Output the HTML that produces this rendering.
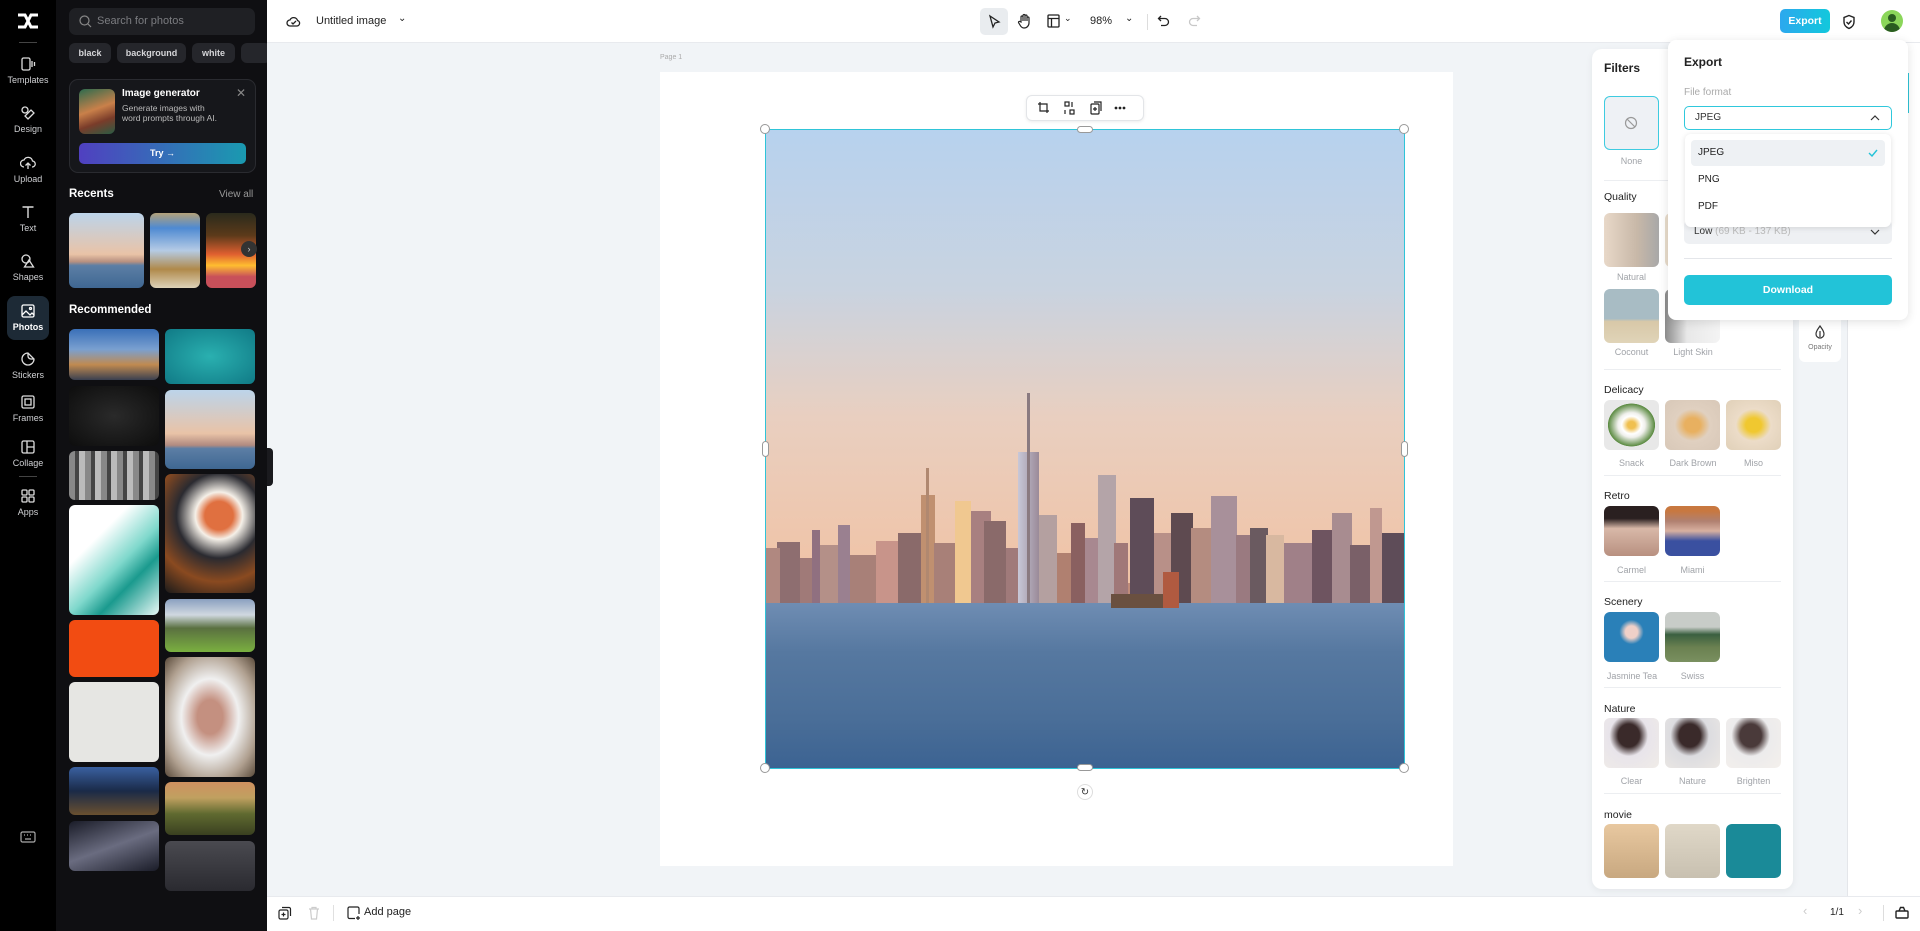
<!DOCTYPE html>
<html><head><meta charset="utf-8"><style>
*{box-sizing:border-box;margin:0;padding:0}
body{width:1920px;height:931px;overflow:hidden;background:#f1f4f7;font-family:"Liberation Sans",sans-serif;position:relative}
.a{position:absolute}
.nav{left:0;top:0;width:56px;height:931px;background:#000}
.ni{position:absolute;left:0;width:56px;text-align:center;color:#cfd0d3;font-size:9px}
.ni svg{display:block;margin:0 auto 3px}
.panel{left:56px;top:0;width:211px;height:931px;background:#0f0f12;overflow:hidden}
.chip{position:absolute;top:43px;height:20px;border-radius:6px;background:#25262b;color:#d6d6d9;font-size:9px;font-weight:bold;line-height:20px;text-align:center}
.th{position:absolute;border-radius:6px;overflow:hidden}
.lbl{font-size:9px;color:#a0a3a8;text-align:center;position:absolute}
.ft{position:absolute;width:55px;height:54px;border-radius:6px}
.sec{position:absolute;left:12px;font-size:10.5px;color:#222}
.dv{position:absolute;left:12px;width:177px;height:1px;background:#eceef1}
.bld{position:absolute;bottom:0}
</style></head><body>
<!-- nav -->
<div class="a nav">
 <svg class="a" style="left:16px;top:12px" width="24" height="18" viewBox="0 0 24 18"><path d="M2 3h7l6 12h7M2 15h7l6-12h7" stroke="#fff" stroke-width="3" fill="none"/></svg>
 <div class="a" style="left:19px;top:42px;width:18px;height:1px;background:#444"></div>
 <div class="ni" style="top:56px"><svg width="16" height="16" viewBox="0 0 16 16" fill="none" stroke="#ddd" stroke-width="1.3"><rect x="2" y="2" width="8" height="12" rx="1.5"/><path d="M12 5v6M14.5 6v4"/></svg>Templates</div>
 <div class="ni" style="top:105px"><svg width="16" height="16" viewBox="0 0 16 16" fill="none" stroke="#ddd" stroke-width="1.3"><circle cx="5" cy="5" r="3"/><path d="M8 14l6-6-3-3-6 6z"/></svg>Design</div>
 <div class="ni" style="top:155px"><svg width="16" height="16" viewBox="0 0 16 16" fill="none" stroke="#ddd" stroke-width="1.3"><path d="M4 12a3.5 3.5 0 010-7 4.5 4.5 0 018.5 1A3 3 0 0112 12M8 14V8M5.5 10.5L8 8l2.5 2.5"/></svg>Upload</div>
 <div class="ni" style="top:204px"><svg width="16" height="16" viewBox="0 0 16 16" fill="none" stroke="#ddd" stroke-width="1.4"><path d="M2.5 3h11M8 3v11"/></svg>Text</div>
 <div class="ni" style="top:253px"><svg width="16" height="16" viewBox="0 0 16 16" fill="none" stroke="#ddd" stroke-width="1.3"><circle cx="6" cy="6" r="4"/><path d="M9 7l4.5 7h-9z"/></svg>Shapes</div>
 <div class="a" style="left:7px;top:296px;width:42px;height:44px;border-radius:8px;background:#1d2a36"></div>
 <div class="ni" style="top:303px;color:#fff;font-weight:bold"><svg width="16" height="16" viewBox="0 0 16 16" fill="none" stroke="#fff" stroke-width="1.3"><rect x="2" y="2" width="12" height="12" rx="1.5"/><path d="M2 12l4-4 4 4 2-2 2 2"/><circle cx="10.5" cy="5.5" r="1"/></svg>Photos</div>
 <div class="ni" style="top:351px"><svg width="16" height="16" viewBox="0 0 16 16" fill="none" stroke="#ddd" stroke-width="1.3"><path d="M14 8a6 6 0 11-6-6l6 6zM8 2v3a3 3 0 003 3h3"/></svg>Stickers</div>
 <div class="ni" style="top:394px"><svg width="16" height="16" viewBox="0 0 16 16" fill="none" stroke="#ddd" stroke-width="1.3"><rect x="2" y="2" width="12" height="12" rx="1.5"/><rect x="5" y="5" width="6" height="6"/></svg>Frames</div>
 <div class="ni" style="top:439px"><svg width="16" height="16" viewBox="0 0 16 16" fill="none" stroke="#ddd" stroke-width="1.3"><rect x="2" y="2" width="12" height="12" rx="1.5"/><path d="M7 2v12M7 8h7"/></svg>Collage</div>
 <div class="a" style="left:19px;top:476px;width:18px;height:1px;background:#444"></div>
 <div class="ni" style="top:488px"><svg width="16" height="16" viewBox="0 0 16 16" fill="none" stroke="#ddd" stroke-width="1.3"><rect x="2" y="2" width="5" height="5" rx="1"/><rect x="9" y="2" width="5" height="5" rx="1"/><rect x="2" y="9" width="5" height="5" rx="1"/><rect x="9" y="9" width="5" height="5" rx="1"/></svg>Apps</div>
 <svg class="a" style="left:20px;top:830px" width="16" height="14" viewBox="0 0 16 14" fill="none" stroke="#aaa" stroke-width="1.2"><rect x="1" y="2" width="14" height="10" rx="1.5"/><path d="M4 5h1M7 5h1M10 5h1M5 9h6"/></svg>
</div>
<!-- panel -->
<div class="a panel">
 <div class="a" style="left:13px;top:8px;width:186px;height:27px;border-radius:7px;background:#1f2024"></div>
 <svg class="a" style="left:23px;top:15px" width="13" height="13" viewBox="0 0 13 13" fill="none" stroke="#888" stroke-width="1.2"><circle cx="5.5" cy="5.5" r="4.5"/><path d="M9 9l3 3"/></svg>
 <div class="a" style="left:41px;top:15px;color:#7b7c80;font-size:11px">Search for photos</div>
 <div class="chip" style="left:13px;width:42px">black</div>
 <div class="chip" style="left:61px;width:69px">background</div>
 <div class="chip" style="left:136px;width:43px">white</div>
 <div class="chip" style="left:185px;width:30px"></div>
 <div class="a" style="left:13px;top:79px;width:187px;height:94px;border-radius:9px;background:#16171b;border:1px solid #2a2b30"></div>
 <div class="a" style="left:23px;top:89px;width:36px;height:45px;border-radius:6px;background:linear-gradient(160deg,#2c6b4e,#c9804a 45%,#7a3c2a 70%,#2a5c44)"></div>
 <div class="a" style="left:66px;top:88px;color:#fff;font-size:10px;font-weight:bold">Image generator</div>
 <div class="a" style="left:66px;top:103px;color:#bbb;font-size:8.5px;line-height:10px">Generate images with<br>word prompts through AI.</div>
 <div class="a" style="left:180px;top:86px;color:#888;font-size:12px">✕</div>
 <div class="a" style="left:23px;top:143px;width:167px;height:21px;border-radius:5px;background:linear-gradient(90deg,#5040c0,#1a9ab0);color:#fff;font-size:9px;font-weight:bold;text-align:center;line-height:21px">Try →</div>
 <div class="a" style="left:13px;top:188px;color:#fff;font-size:11.5px;font-weight:bold">Recents</div>
 <div class="a" style="left:163px;top:189px;color:#999;font-size:10px">View all</div>
 <div class="th" style="left:13px;top:213px;width:75px;height:75px;background:linear-gradient(#bcd4ea,#e9c3a7 55%,#b79080 65%,#5c7ea5 70%,#3f6792)"></div>
 <div class="th" style="left:94px;top:213px;width:50px;height:75px;background:linear-gradient(#b4a27a,#4e8ad2 20%,#b5cbe5 50%,#b0894a 75%,#ddd2b8)"></div>
 <div class="th" style="left:150px;top:213px;width:50px;height:75px;background:linear-gradient(#2a2a1c,#5c3a1a 30%,#e06030 55%,#ffbd30 70%,#c8505a 85%)"></div>
 <div class="a" style="left:185px;top:241px;width:16px;height:16px;border-radius:50%;background:#333;color:#ccc;font-size:9px;text-align:center;line-height:16px">›</div>
 <div class="a" style="left:13px;top:304px;color:#fff;font-size:11.5px;font-weight:bold">Recommended</div>
 <div class="th" style="left:13px;top:329px;width:90px;height:51px;background:linear-gradient(#3a70b8,#7aa0d0 40%,#c08a50 70%,#3a4050)"></div>
 <div class="th" style="left:13px;top:386px;width:90px;height:60px;background:radial-gradient(#2a2a2a,#0d0d0d)"></div>
 <div class="th" style="left:13px;top:451px;width:90px;height:49px;background:repeating-linear-gradient(90deg,#888 0 6px,#444 6px 10px,#bbb 10px 16px)"></div>
 <div class="th" style="left:13px;top:505px;width:90px;height:110px;background:linear-gradient(135deg,#fff 30%,#7fd8cc 55%,#1a9a8e 70%,#e8f8f6)"></div>
 <div class="th" style="left:13px;top:620px;width:90px;height:57px;background:#f24c12"></div>
 <div class="th" style="left:13px;top:682px;width:90px;height:80px;background:#e6e6e3"></div>
 <div class="th" style="left:13px;top:767px;width:90px;height:48px;background:linear-gradient(#3a60a0,#1a2a48 50%,#6a5030)"></div>
 <div class="th" style="left:13px;top:821px;width:90px;height:50px;background:linear-gradient(160deg,#1a1c28,#6a6c80 50%,#1a1c28)"></div>
 <div class="th" style="left:109px;top:329px;width:90px;height:55px;background:radial-gradient(#2ab0b0,#107a86)"></div>
 <div class="th" style="left:109px;top:390px;width:90px;height:79px;background:linear-gradient(#bcd4ea,#e9c3a7 55%,#b08a80 70%,#5c7ea5 74%,#3f6792)"></div>
 <div class="th" style="left:109px;top:474px;width:90px;height:119px;background:radial-gradient(circle at 60% 35%,#e07040 15%,#f5f0e8 25%,#2a2a30 45%,#8a4a20 70%,#1a1a1a)"></div>
 <div class="th" style="left:109px;top:599px;width:90px;height:53px;background:linear-gradient(#8aa0c0,#d0d8e0 30%,#5a7040 55%,#7ab040)"></div>
 <div class="th" style="left:109px;top:657px;width:90px;height:120px;background:radial-gradient(#c49080 20%,#f0f0f0 45%,#b0a090 75%,#5a4a3a)"></div>
 <div class="th" style="left:109px;top:782px;width:90px;height:53px;background:linear-gradient(#d09060,#c0a060 30%,#606a30 60%,#3a4020)"></div>
 <div class="th" style="left:109px;top:841px;width:90px;height:50px;background:linear-gradient(#4a4a50,#2a2a30)"></div>
</div>
<div class="a" style="left:267px;top:448px;width:6px;height:38px;background:#1a1a1e;border-radius:0 4px 4px 0"></div>
<!-- top bar -->
<div class="a" style="left:267px;top:0;width:1653px;height:43px;background:#fff;border-bottom:1px solid #e8eaee"></div>
<svg class="a" style="left:286px;top:14px" width="15" height="14" viewBox="0 0 15 14" fill="none" stroke="#222" stroke-width="1.3"><path d="M4 12a3 3 0 010-6 4 4 0 017.5 0.5A2.8 2.8 0 0111 12z"/><path d="M5.5 8.5l1.5 1.5 3-3"/></svg>
<div class="a" style="left:316px;top:15px;font-size:11px;color:#222">Untitled image</div>
<div class="a" style="left:398px;top:13px;font-size:10px;color:#222">⌄</div>
<div class="a" style="left:980px;top:8px;width:28px;height:27px;border-radius:5px;background:#e9ecef"></div>
<svg class="a" style="left:987px;top:14px" width="14" height="15" viewBox="0 0 14 15" fill="none" stroke="#222" stroke-width="1.3"><path d="M3 2l9 6-4 1-2 4z"/></svg>
<svg class="a" style="left:1017px;top:13px" width="15" height="16" viewBox="0 0 15 16" fill="none" stroke="#222" stroke-width="1.2"><path d="M4 9V4a1 1 0 012 0v4V2.5a1 1 0 012 0V8V3a1 1 0 012 0v5V5a1 1 0 012 0v5a5 5 0 01-5 5c-2 0-3-1-4-3l-1.5-2.5a1 1 0 011.5-1z"/></svg>
<svg class="a" style="left:1047px;top:14px" width="13" height="14" viewBox="0 0 13 14" fill="none" stroke="#222" stroke-width="1.3"><rect x="1" y="1" width="11" height="12" rx="1"/><path d="M1 4.5h11M4.5 4.5V13"/></svg>
<div class="a" style="left:1064px;top:13px;font-size:9px;color:#222">⌄</div>
<div class="a" style="left:1090px;top:15px;font-size:11px;color:#222">98%</div>
<div class="a" style="left:1125px;top:13px;font-size:10px;color:#222">⌄</div>
<div class="a" style="left:1147px;top:14px;width:1px;height:16px;background:#ddd"></div>
<svg class="a" style="left:1157px;top:14px" width="13" height="14" viewBox="0 0 13 14" fill="none" stroke="#222" stroke-width="1.3"><path d="M4 2L1.5 4.5 4 7M1.5 4.5H8a3.5 3.5 0 010 7H4"/></svg>
<svg class="a" style="left:1188px;top:14px" width="13" height="14" viewBox="0 0 13 14" fill="none" stroke="#c8c8c8" stroke-width="1.3"><path d="M9 2l2.5 2.5L9 7M11.5 4.5H5a3.5 3.5 0 000 7h4"/></svg>
<div class="a" style="left:1780px;top:9px;width:50px;height:24px;border-radius:5px;background:linear-gradient(90deg,#2ca8ee,#12c8dc);color:#fff;font-size:10.5px;font-weight:bold;text-align:center;line-height:24px">Export</div>
<svg class="a" style="left:1842px;top:14px" width="14" height="16" viewBox="0 0 14 16" fill="none" stroke="#222" stroke-width="1.4"><path d="M7 1.5l5 2v4.5c0 3-2.3 5.3-5 6.5-2.7-1.2-5-3.5-5-6.5V3.5z"/><path d="M4.5 8l2 2 3-3.5"/></svg>
<div class="a" style="left:1881px;top:10px;width:22px;height:22px;border-radius:50%;background:#8bd65a;overflow:hidden"><div class="a" style="left:7px;top:4px;width:8px;height:8px;border-radius:50%;background:#2a5c20"></div><div class="a" style="left:3px;top:13px;width:16px;height:12px;border-radius:8px 8px 0 0;background:#2a5c20"></div></div>
<!-- canvas -->
<div class="a" style="left:660px;top:54px;font-size:7px;color:#aaa">Page 1</div>
<div class="a" style="left:660px;top:72px;width:793px;height:794px;background:#fff"></div>
<div class="a" style="left:1026px;top:95px;width:118px;height:26px;background:#fff;border:1px solid #e3e5e8;border-radius:6px;box-shadow:0 1px 3px rgba(0,0,0,.08)"></div>
<svg class="a" style="left:1037px;top:101px" width="100" height="14" viewBox="0 0 100 14" fill="none" stroke="#222" stroke-width="1.2"><path d="M3 1v9h9M1 3h9v9"/><rect x="28" y="1" width="4" height="4"/><rect x="33" y="9" width="4" height="4"/><path d="M35 1v5M28 9v4"/><rect x="54" y="3" width="8" height="10" rx="1"/><path d="M57 1h7v9M58 6v4M56 8h4"/><circle cx="79" cy="7" r=".8" fill="#222"/><circle cx="83" cy="7" r=".8" fill="#222"/><circle cx="87" cy="7" r=".8" fill="#222"/></svg>
<!-- image -->
<div class="a" style="left:766px;top:130px;width:638px;height:638px;overflow:hidden;background:linear-gradient(#b7d2ee 0%,#c9d3e0 25%,#e9cfc0 45%,#f0c3a6 70%,#e8b696 80%)">
 <div class="bld" style="left:0;bottom:165px;width:638px;height:20px;background:#c08c7a"></div>
 <div style="position:absolute;left:0;top:0;width:638px;height:473px">
 <div class="bld" style="left:11px;width:23px;height:61px;background:#8e6e70"></div>
 <div class="bld" style="left:0;width:14px;height:55px;background:#b08880"></div>
 <div class="bld" style="left:34px;width:14px;height:45px;background:#a07a78"></div>
 <div class="bld" style="left:46px;width:8px;height:73px;background:#907080"></div>
 <div class="bld" style="left:54px;width:20px;height:58px;background:#b49088"></div>
 <div class="bld" style="left:72px;width:12px;height:78px;background:#9a8090"></div>
 <div class="bld" style="left:84px;width:26px;height:48px;background:#a88078"></div>
 <div class="bld" style="left:110px;width:22px;height:62px;background:#c8948a"></div>
 <div class="bld" style="left:132px;width:24px;height:70px;background:#8a6a6a"></div>
 <div class="bld" style="left:155px;width:14px;height:108px;background:#c09070"></div>
 <div class="bld" style="left:160px;width:3px;height:135px;background:#b08870"></div>
 <div class="bld" style="left:168px;width:22px;height:60px;background:#a88078"></div>
 <div class="bld" style="left:189px;width:16px;height:102px;background:#f0c890"></div>
 <div class="bld" style="left:205px;width:20px;height:92px;background:#a88080"></div>
 <div class="bld" style="left:218px;width:22px;height:82px;background:#8a6a6a"></div>
 <div class="bld" style="left:240px;width:12px;height:55px;background:#a07a7a"></div>
 <div class="bld" style="left:252px;width:21px;height:151px;background:linear-gradient(90deg,#c8c8d8,#9a8a98)"></div>
 <div class="bld" style="left:261px;width:3px;height:210px;background:#8a7a80"></div>
 <div class="bld" style="left:273px;width:18px;height:88px;background:#b4a0a0"></div>
 <div class="bld" style="left:291px;width:18px;height:50px;background:#b08070"></div>
 <div class="bld" style="left:305px;width:14px;height:80px;background:#8a6060"></div>
 <div class="bld" style="left:319px;width:14px;height:65px;background:#a88890"></div>
 <div class="bld" style="left:332px;width:18px;height:128px;background:#b4a4a8"></div>
 <div class="bld" style="left:348px;width:14px;height:60px;background:#a07878"></div>
 <div class="bld" style="left:364px;width:24px;height:105px;background:#5e4c58"></div>
 <div class="bld" style="left:388px;width:20px;height:70px;background:#b89088"></div>
 <div class="bld" style="left:405px;width:22px;height:90px;background:#5e4a50"></div>
 <div class="bld" style="left:425px;width:20px;height:75px;background:#b48c80"></div>
 <div class="bld" style="left:445px;width:26px;height:107px;background:#a8909a"></div>
 <div class="bld" style="left:470px;width:16px;height:68px;background:#9a7a80"></div>
 <div class="bld" style="left:484px;width:18px;height:75px;background:#6a5a60"></div>
 <div class="bld" style="left:500px;width:18px;height:68px;background:#d8b8a0"></div>
 <div class="bld" style="left:518px;width:28px;height:60px;background:#a08088"></div>
 <div class="bld" style="left:546px;width:20px;height:73px;background:#6e5460"></div>
 <div class="bld" style="left:566px;width:20px;height:90px;background:#a88c90"></div>
 <div class="bld" style="left:584px;width:20px;height:58px;background:#7a6068"></div>
 <div class="bld" style="left:604px;width:12px;height:95px;background:#c09890"></div>
 <div class="bld" style="left:616px;width:22px;height:70px;background:#5e4c58"></div>
 </div>
 <div class="bld" style="left:0;bottom:0;width:638px;height:165px;background:linear-gradient(#6f8db3,#5678a0 30%,#4a6e98 70%,#3c6392)"></div>
 <div class="bld" style="left:345px;bottom:160px;width:52px;height:14px;background:#6a5040"></div>
 <div class="bld" style="left:397px;bottom:160px;width:16px;height:36px;background:#b05a40"></div>
</div>
<div class="a" style="left:765px;top:129px;width:640px;height:640px;border:1.5px solid #2fc4d8"></div>
<div class="a" style="left:760px;top:124px;width:10px;height:10px;border-radius:50%;background:#fff;border:1px solid #999"></div>
<div class="a" style="left:1399px;top:124px;width:10px;height:10px;border-radius:50%;background:#fff;border:1px solid #999"></div>
<div class="a" style="left:760px;top:763px;width:10px;height:10px;border-radius:50%;background:#fff;border:1px solid #999"></div>
<div class="a" style="left:1399px;top:763px;width:10px;height:10px;border-radius:50%;background:#fff;border:1px solid #999"></div>
<div class="a" style="left:1077px;top:126px;width:16px;height:7px;border-radius:4px;background:#fff;border:1px solid #999"></div>
<div class="a" style="left:1077px;top:764px;width:16px;height:7px;border-radius:4px;background:#fff;border:1px solid #999"></div>
<div class="a" style="left:762px;top:441px;width:7px;height:16px;border-radius:4px;background:#fff;border:1px solid #999"></div>
<div class="a" style="left:1401px;top:441px;width:7px;height:16px;border-radius:4px;background:#fff;border:1px solid #999"></div>
<div class="a" style="left:1077px;top:784px;width:16px;height:16px;border-radius:50%;background:#fff;border:1px solid #ddd;font-size:10px;text-align:center;line-height:15px;color:#333">↻</div>
<!-- right strip -->
<div class="a" style="left:1847px;top:43px;width:73px;height:853px;background:#fff;border-left:1px solid #e4e6ea"></div>
<div class="a" style="left:1906px;top:73px;width:3px;height:40px;background:#2fc4d8"></div>
<div class="a" style="left:1799px;top:315px;width:42px;height:47px;background:#fff;border-radius:6px"></div>
<svg class="a" style="left:1814px;top:325px" width="12" height="14" viewBox="0 0 12 14" fill="none" stroke="#333" stroke-width="1.2"><path d="M6 1C4 4 2 6 2 9a4 4 0 008 0c0-3-2-5-4-8zM6 6v6"/></svg>
<div class="a" style="left:1799px;top:344px;width:42px;font-size:7px;color:#777;text-align:center">Opacity</div>
<!-- filters -->
<div class="a" style="left:1592px;top:49px;width:201px;height:840px;background:#fff;border-radius:10px;overflow:hidden;box-shadow:0 2px 8px rgba(0,0,0,.06)">
 <div class="a" style="left:12px;top:12px;font-size:12px;font-weight:bold;color:#222">Filters</div>
 <div class="ft" style="left:12px;top:47px;background:#eef1f5;border:1.5px solid #3ecbe0"></div>
 <svg class="a" style="left:32px;top:67px" width="14" height="14" viewBox="0 0 14 14" fill="none" stroke="#999" stroke-width="1.2"><circle cx="7" cy="7" r="5.5"/><path d="M3 3l8 8"/></svg>
 <div class="lbl" style="left:12px;top:107px;width:55px">None</div>
 <div class="dv" style="top:131px"></div>
 <div class="sec" style="top:142px">Quality</div>
 <div class="ft" style="left:12px;top:164px;background:linear-gradient(90deg,#e8d8c8,#c8b8a8 60%,#a8a8a8)"></div>
 <div class="ft" style="left:73px;top:164px;background:#e8dccc"></div>
 <div class="lbl" style="left:12px;top:223px;width:55px">Natural</div>
 <div class="ft" style="left:12px;top:240px;background:linear-gradient(#a8bcc4 55%,#d8c8a8 60%,#e0d4b8)"></div>
 <div class="ft" style="left:73px;top:240px;background:linear-gradient(90deg,#8a8a8a,#e8e8e8 40%,#f4f4f4)"></div>
 <div class="lbl" style="left:12px;top:298px;width:55px">Coconut</div>
 <div class="lbl" style="left:70px;top:298px;width:62px">Light Skin</div>
 <div class="dv" style="top:320px"></div>
 <div class="sec" style="top:335px">Delicacy</div>
 <div class="ft" style="left:12px;top:351px;height:50px;background:radial-gradient(ellipse at 50% 50%,#f0c050 10%,#fff 25%,#f0f0ec 35%,#5a8a40 60%,#e8e8e8 61%)"></div>
 <div class="ft" style="left:73px;top:351px;height:50px;background:radial-gradient(#e8b060 20%,#e0d0c0 45%,#d8c8b8)"></div>
 <div class="ft" style="left:134px;top:351px;height:50px;background:radial-gradient(#f0c830 20%,#ecdcc8 45%,#e0d0b8)"></div>
 <div class="lbl" style="left:12px;top:409px;width:55px">Snack</div>
 <div class="lbl" style="left:70px;top:409px;width:62px">Dark Brown</div>
 <div class="lbl" style="left:134px;top:409px;width:55px">Miso</div>
 <div class="dv" style="top:426px"></div>
 <div class="sec" style="top:441px">Retro</div>
 <div class="ft" style="left:12px;top:457px;height:50px;background:linear-gradient(#2a2020 25%,#d8b8a8 45%,#b89080)"></div>
 <div class="ft" style="left:73px;top:457px;height:50px;background:linear-gradient(#c87840 10%,#b08070 30%,#d8b0a0 50%,#3a50a0 70%)"></div>
 <div class="lbl" style="left:12px;top:516px;width:55px">Carmel</div>
 <div class="lbl" style="left:73px;top:516px;width:55px">Miami</div>
 <div class="dv" style="top:532px"></div>
 <div class="sec" style="top:547px">Scenery</div>
 <div class="ft" style="left:12px;top:563px;height:50px;background:radial-gradient(circle at 50% 40%,#f0d0c8 15%,#2a80b8 30%)"></div>
 <div class="ft" style="left:73px;top:563px;height:50px;background:linear-gradient(#c8ccc8 30%,#3a6040 45%,#6a8050 70%,#7a9060)"></div>
 <div class="lbl" style="left:9px;top:622px;width:62px">Jasmine Tea</div>
 <div class="lbl" style="left:73px;top:622px;width:55px">Swiss</div>
 <div class="dv" style="top:638px"></div>
 <div class="sec" style="top:654px">Nature</div>
 <div class="ft" style="left:12px;top:669px;height:50px;background:radial-gradient(ellipse at 45% 35%,#3a2a2a 25%,#e8e4ea 45%,#f0ece8)"></div>
 <div class="ft" style="left:73px;top:669px;height:50px;background:radial-gradient(ellipse at 45% 35%,#3a2a2a 25%,#dcdce0 45%,#ece8e4)"></div>
 <div class="ft" style="left:134px;top:669px;height:50px;background:radial-gradient(ellipse at 45% 35%,#4a3a3a 25%,#ecebec 45%,#f4f0ec)"></div>
 <div class="lbl" style="left:12px;top:727px;width:55px">Clear</div>
 <div class="lbl" style="left:73px;top:727px;width:55px">Nature</div>
 <div class="lbl" style="left:134px;top:727px;width:55px">Brighten</div>
 <div class="dv" style="top:744px"></div>
 <div class="sec" style="top:760px">movie</div>
 <div class="ft" style="left:12px;top:775px;background:linear-gradient(#e8c8a0,#c8a880)"></div>
 <div class="ft" style="left:73px;top:775px;background:linear-gradient(#e0d8c8,#c8c0b0)"></div>
 <div class="ft" style="left:134px;top:775px;background:#1a8a98"></div>
</div>
<!-- export popup -->
<div class="a" style="left:1668px;top:40px;width:240px;height:280px;background:#fff;border-radius:8px;box-shadow:0 2px 10px rgba(0,0,0,.12)">
 <div class="a" style="left:16px;top:15px;font-size:12px;font-weight:bold;color:#222">Export</div>
 <div class="a" style="left:16px;top:47px;font-size:10px;color:#aaa">File format</div>
 <div class="a" style="left:16px;top:66px;width:208px;height:24px;border:1.5px solid #2fc8dc;border-radius:5px;font-size:10px;color:#333;line-height:21px;padding-left:10px">JPEG</div>
 <svg class="a" style="left:202px;top:75px" width="10" height="6" viewBox="0 0 10 6" fill="none" stroke="#333" stroke-width="1.2"><path d="M1 5l4-4 4 4"/></svg>
 <div class="a" style="left:16px;top:180px;width:208px;height:24px;background:#eef0f3;border-radius:5px;font-size:10px;color:#333;line-height:24px;padding-left:10px">Low <span style="color:#bbb">(69 KB - 137 KB)</span></div>
 <svg class="a" style="left:202px;top:189px" width="10" height="6" viewBox="0 0 10 6" fill="none" stroke="#333" stroke-width="1.2"><path d="M1 1l4 4 4-4"/></svg>
 <div class="a" style="left:16px;top:218px;width:208px;height:1px;background:#e4e6ea"></div>
 <div class="a" style="left:16px;top:235px;width:208px;height:30px;background:#22c3d8;border-radius:5px;color:#fff;font-size:10.5px;font-weight:bold;text-align:center;line-height:30px">Download</div>
 <div class="a" style="left:17px;top:94px;width:206px;height:93px;background:#fff;border-radius:6px;box-shadow:0 1px 6px rgba(0,0,0,.12)">
  <div class="a" style="left:6px;top:6px;width:194px;height:26px;background:#eef1f4;border-radius:4px"></div>
  <div class="a" style="left:13px;top:13px;font-size:10px;color:#222">JPEG</div>
  <svg class="a" style="left:183px;top:15px" width="10" height="8" viewBox="0 0 10 8" fill="none" stroke="#22c3d8" stroke-width="1.4"><path d="M1 4l3 3 5-6"/></svg>
  <div class="a" style="left:13px;top:40px;font-size:10px;color:#222">PNG</div>
  <div class="a" style="left:13px;top:67px;font-size:10px;color:#222">PDF</div>
 </div>
</div>
<!-- bottom bar -->
<div class="a" style="left:267px;top:896px;width:1653px;height:35px;background:#fff;border-top:1px solid #e8eaee"></div>
<svg class="a" style="left:278px;top:906px" width="14" height="14" viewBox="0 0 14 14" fill="none" stroke="#222" stroke-width="1.2"><rect x="1" y="4" width="9" height="9" rx="1.5"/><path d="M4 1.5h7a1.5 1.5 0 011.5 1.5v7M5.5 6.5v4M3.5 8.5h4"/></svg>
<svg class="a" style="left:308px;top:906px" width="12" height="14" viewBox="0 0 12 14" fill="none" stroke="#ccc" stroke-width="1.2"><path d="M1 3h10M4 3V1.5h4V3M2.5 3l1 10h5l1-10"/></svg>
<div class="a" style="left:333px;top:905px;width:1px;height:16px;background:#e0e0e0"></div>
<svg class="a" style="left:347px;top:906px" width="14" height="14" viewBox="0 0 14 14" fill="none" stroke="#222" stroke-width="1.2"><path d="M8 12.5H2.5a1.5 1.5 0 01-1.5-1.5V2.5A1.5 1.5 0 012.5 1h8A1.5 1.5 0 0112 2.5V8M11 10v4M9 12h4"/></svg>
<div class="a" style="left:364px;top:906px;font-size:11px;color:#222">Add page</div>
<div class="a" style="left:1803px;top:903px;font-size:13px;color:#ccc">‹</div>
<div class="a" style="left:1830px;top:907px;font-size:10px;color:#222">1/1</div>
<div class="a" style="left:1858px;top:903px;font-size:13px;color:#ccc">›</div>
<div class="a" style="left:1883px;top:905px;width:1px;height:16px;background:#ddd"></div>
<svg class="a" style="left:1895px;top:906px" width="14" height="13" viewBox="0 0 14 13" fill="none" stroke="#222" stroke-width="1.4"><rect x="1" y="5" width="12" height="7" rx="1"/><path d="M4 5l1.5-3.5h3L10 5"/></svg>
</body></html>
